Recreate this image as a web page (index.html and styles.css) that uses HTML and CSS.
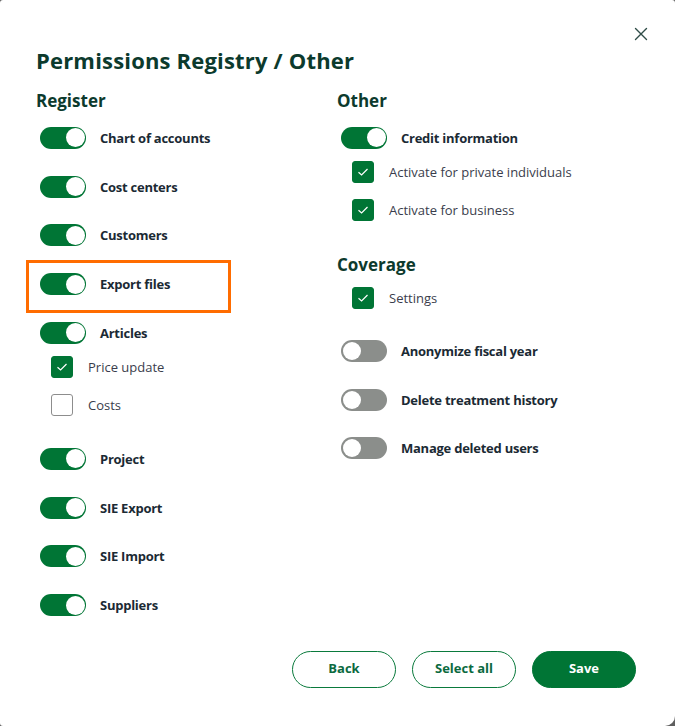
FILE: index.html
```html
<!DOCTYPE html>
<html>
<head>
<meta charset="utf-8">
<link rel="stylesheet" href="styles.css">
</head>
<body>
<div class="modal">
  <button class="close" aria-label="Close">
    <svg width="14" height="14" viewBox="0 0 14 14"><path d="M1.5 1.5 L12.5 12.5 M12.5 1.5 L1.5 12.5" stroke="#2f4c47" stroke-width="1.4" fill="none" stroke-linecap="round"/></svg>
  </button>
  <h1 class="title">Permissions Registry / Other</h1>
  <div class="cols">
    <div class="col">
      <h2 class="heading">Register</h2>
      <div class="trow"><span class="toggle on"></span><span class="tlabel">Chart of accounts</span></div>
      <div class="trow"><span class="toggle on"></span><span class="tlabel">Cost centers</span></div>
      <div class="trow"><span class="toggle on"></span><span class="tlabel">Customers</span></div>
      <div class="trow highlighted"><span class="toggle on"></span><span class="tlabel">Export files</span><span class="hl"></span></div>
      <div class="trow"><span class="toggle on"></span><span class="tlabel">Articles</span></div>
      <div class="cgroup">
        <div class="crow"><span class="check on"><svg width="12" height="10" viewBox="0 0 12 10"><path d="M1.5 5.2 L4.6 8 L10.5 2" stroke="#fff" stroke-width="1.2" fill="none"/></svg></span><span class="clabel">Price update</span></div>
        <div class="crow"><span class="check"></span><span class="clabel">Costs</span></div>
      </div>
      <div class="trow after-group"><span class="toggle on"></span><span class="tlabel">Project</span></div>
      <div class="trow"><span class="toggle on"></span><span class="tlabel">SIE Export</span></div>
      <div class="trow"><span class="toggle on"></span><span class="tlabel">SIE Import</span></div>
      <div class="trow"><span class="toggle on"></span><span class="tlabel">Suppliers</span></div>
    </div>
    <div class="col right">
      <h2 class="heading">Other</h2>
      <div class="trow"><span class="toggle on"></span><span class="tlabel">Credit information</span></div>
      <div class="cgroup">
        <div class="crow"><span class="check on"><svg width="12" height="10" viewBox="0 0 12 10"><path d="M1.5 5.2 L4.6 8 L10.5 2" stroke="#fff" stroke-width="1.2" fill="none"/></svg></span><span class="clabel">Activate for private individuals</span></div>
        <div class="crow"><span class="check on"><svg width="12" height="10" viewBox="0 0 12 10"><path d="M1.5 5.2 L4.6 8 L10.5 2" stroke="#fff" stroke-width="1.2" fill="none"/></svg></span><span class="clabel">Activate for business</span></div>
      </div>
      <h2 class="heading coverage">Coverage</h2>
      <div class="cgroup cov">
        <div class="crow"><span class="check on"><svg width="12" height="10" viewBox="0 0 12 10"><path d="M1.5 5.2 L4.6 8 L10.5 2" stroke="#fff" stroke-width="1.2" fill="none"/></svg></span><span class="clabel">Settings</span></div>
      </div>
      <div class="trow after-cov"><span class="toggle"></span><span class="tlabel">Anonymize fiscal year</span></div>
      <div class="trow"><span class="toggle"></span><span class="tlabel">Delete treatment history</span></div>
      <div class="trow"><span class="toggle"></span><span class="tlabel">Manage deleted users</span></div>
    </div>
  </div>
  <div class="actions">
    <button class="btn outline">Back</button>
    <button class="btn outline">Select all</button>
    <button class="btn primary">Save</button>
  </div>
</div>
</body>
</html>
```
FILE: styles.css
```css
* { box-sizing: border-box; }
html, body { margin: 0; padding: 0; }
body {
  background: #5f5f5f;
  width: 675px;
  height: 726px;
  overflow: hidden;
  font-family: "Open Sans", "Liberation Sans", sans-serif;
}
.modal {
  position: relative;
  width: 675px;
  height: 726px;
  background: #fff;
  border-radius: 3px 3px 10px 3px;
  padding: 46px 39px 0 36px;
}
.close {
  position: absolute;
  top: 27px;
  left: 634px;
  width: 14px;
  height: 14px;
  padding: 0;
  border: 0;
  background: none;
  display: flex;
}
.title {
  margin: 0;
  font-size: 22px;
  line-height: 28px;
  font-weight: 700;
  letter-spacing: 0.18px;
  color: #0c3a2d;
}
.cols {
  display: grid;
  grid-template-columns: 301px 1fr;
  margin-top: 16px;
}
.col { display: flex; flex-direction: column; }
.heading {
  margin: 0 0 1.6px 0;
  font-size: 17px;
  line-height: 22px;
  font-weight: 700;
  color: #0c3a2d;
}
.trow {
  position: relative;
  height: 48.75px;
  display: flex;
  align-items: center;
  padding-left: 4px;
}
.toggle {
  position: relative;
  width: 46px;
  height: 22px;
  border-radius: 11px;
  background: #8b8e8b;
  flex: none;
}
.toggle::after {
  content: "";
  position: absolute;
  top: 2px;
  left: 2px;
  width: 18px;
  height: 18px;
  border-radius: 50%;
  background: #fff;
}
.toggle.on { background: #007535; }
.toggle.on::after { left: 26px; top: 1.5px; width: 19px; height: 19px; }
.tlabel {
  margin-left: 14px;
  font-size: 13px;
  font-weight: 700;
  letter-spacing: -0.25px;
  color: #1b2a34;
}
.hl {
  position: absolute;
  left: -10px;
  top: 0;
  width: 205px;
  height: 53px;
  border: 3px solid #ff6c00;
}
.cgroup { margin-top: -9.4px; }
.crow {
  height: 38px;
  display: flex;
  align-items: center;
  padding-left: 15px;
}
.check {
  width: 22px;
  height: 22px;
  border-radius: 3px;
  border: 1px solid #8d8d8d;
  display: flex;
  align-items: center;
  justify-content: center;
  flex: none;
}
.check.on { background: #007535; border-color: #007535; }
.clabel {
  margin-left: 15px;
  font-size: 13px;
  color: #3a3d4c;
}
.after-group { margin-top: 10.6px; }
.heading.coverage { margin-top: 25px; margin-bottom: 0; }
.cgroup.cov { margin-top: 3px; }
.after-cov { margin-top: 9.6px; }
.actions {
  position: absolute;
  right: 39px;
  top: 651px;
  display: flex;
  gap: 16px;
}
.btn {
  width: 104px;
  height: 37px;
  border-radius: 19px;
  padding: 0 0 3px 0;
  font-family: inherit;
  font-size: 13px;
  font-weight: 700;
  cursor: pointer;
}
.btn.outline { background: #fff; border: 1px solid #0a7a3c; color: #0b6a40; }
.btn.primary { background: #007535; border: 1px solid #007535; color: #fff; }
```
